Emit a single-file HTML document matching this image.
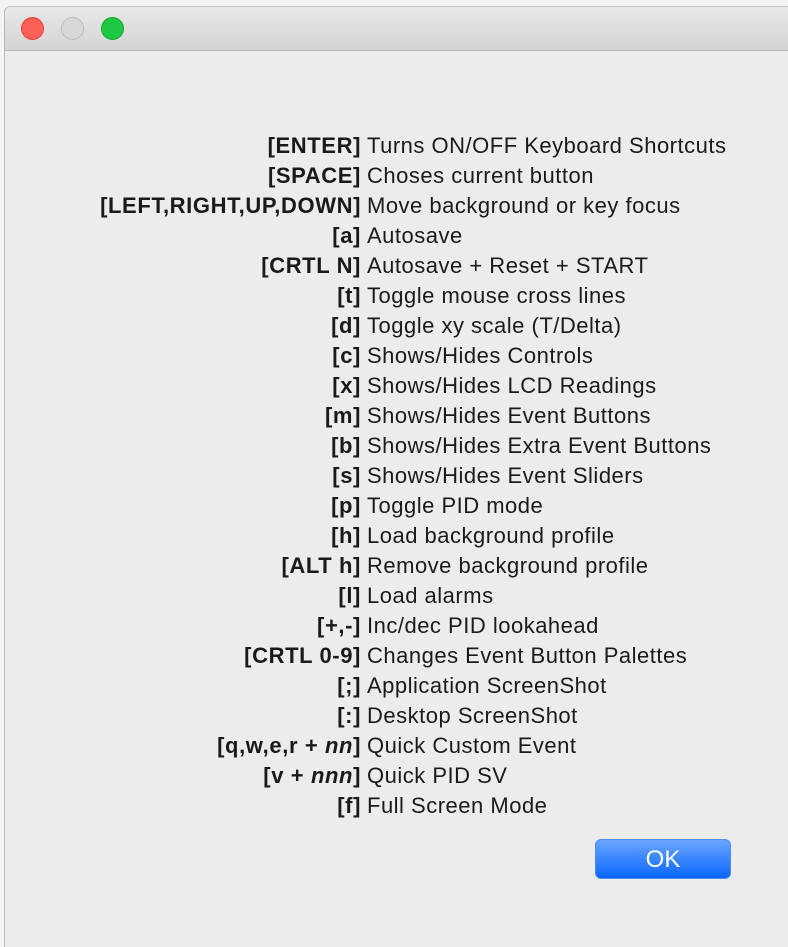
<!DOCTYPE html>
<html><head><style>
body{margin:0;width:788px;height:932px;background:#f4f4f4;position:relative;overflow:hidden;font-family:"Liberation Sans",sans-serif;}
.win{position:absolute;left:4px;top:6px;width:800px;height:940px;background:#ececec;border-radius:6px 0 0 0;border-left:1px solid #b8b8b8;border-top:1px solid #c8c8c8;}
.tb{height:43px;background:linear-gradient(#e8e8e8,#d4d4d4);border-bottom:1px solid #b4b4b4;border-radius:6px 0 0 0;position:relative}
.d{position:absolute;top:10px;width:23px;height:23px;border-radius:50%}
.rows{position:absolute;left:0;top:131px;width:788px;font-size:22px;color:#1a1a1a}
.r{height:30px;line-height:30px;position:relative}
.k{position:absolute;right:427px;font-weight:bold;white-space:nowrap;letter-spacing:0.6px}
.t{position:absolute;left:367px;white-space:nowrap;letter-spacing:0.5px}
.ok{position:absolute;left:595px;top:839px;width:136px;height:40px;border-radius:6px;background:linear-gradient(#6aa6ff,#0a66ff);color:#fff;font-size:24px;text-align:center;line-height:40px;border:1px solid #4d8ef0;box-sizing:border-box}
</style></head><body>
<div class="win"><div class="tb">
<div class="d" style="left:16px;background:#fe5f57;border:1px solid #e0443e;box-sizing:border-box"></div>
<div class="d" style="left:56px;background:#d8d8d8;border:1px solid #bcbcbc;box-sizing:border-box"></div>
<div class="d" style="left:96px;background:#1fc843;border:1px solid #14a832;box-sizing:border-box"></div>
</div></div>
<div class="rows">
<div class="r"><span class="k">[ENTER]</span><span class="t">Turns ON/OFF Keyboard Shortcuts</span></div>
<div class="r"><span class="k">[SPACE]</span><span class="t">Choses current button</span></div>
<div class="r"><span class="k">[LEFT,RIGHT,UP,DOWN]</span><span class="t">Move background or key focus</span></div>
<div class="r"><span class="k">[a]</span><span class="t">Autosave</span></div>
<div class="r"><span class="k">[CRTL N]</span><span class="t">Autosave + Reset + START</span></div>
<div class="r"><span class="k">[t]</span><span class="t">Toggle mouse cross lines</span></div>
<div class="r"><span class="k">[d]</span><span class="t">Toggle xy scale (T/Delta)</span></div>
<div class="r"><span class="k">[c]</span><span class="t">Shows/Hides Controls</span></div>
<div class="r"><span class="k">[x]</span><span class="t">Shows/Hides LCD Readings</span></div>
<div class="r"><span class="k">[m]</span><span class="t">Shows/Hides Event Buttons</span></div>
<div class="r"><span class="k">[b]</span><span class="t">Shows/Hides Extra Event Buttons</span></div>
<div class="r"><span class="k">[s]</span><span class="t">Shows/Hides Event Sliders</span></div>
<div class="r"><span class="k">[p]</span><span class="t">Toggle PID mode</span></div>
<div class="r"><span class="k">[h]</span><span class="t">Load background profile</span></div>
<div class="r"><span class="k">[ALT h]</span><span class="t">Remove background profile</span></div>
<div class="r"><span class="k">[l]</span><span class="t">Load alarms</span></div>
<div class="r"><span class="k">[+,-]</span><span class="t">Inc/dec PID lookahead</span></div>
<div class="r"><span class="k">[CRTL 0-9]</span><span class="t">Changes Event Button Palettes</span></div>
<div class="r"><span class="k">[;]</span><span class="t">Application ScreenShot</span></div>
<div class="r"><span class="k">[:]</span><span class="t">Desktop ScreenShot</span></div>
<div class="r"><span class="k">[q,w,e,r + <i>nn</i>]</span><span class="t">Quick Custom Event</span></div>
<div class="r"><span class="k">[v + <i>nnn</i>]</span><span class="t">Quick PID SV</span></div>
<div class="r"><span class="k">[f]</span><span class="t">Full Screen Mode</span></div>
</div>
<div class="ok">OK</div>
</body></html>
